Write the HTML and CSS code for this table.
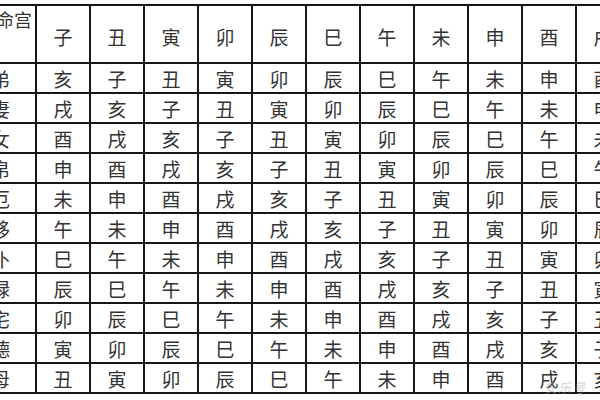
FILE: index.html
```html
<!DOCTYPE html>
<html lang="zh">
<head>
<meta charset="utf-8">
<link rel="stylesheet" href="styles.css">
</head>
<body>
<div class="page">
  <div class="grid">
    <div class="cell corner">命宫</div>
    <div class="cell head">子</div><div class="cell head">丑</div><div class="cell head">寅</div><div class="cell head">卯</div><div class="cell head">辰</div><div class="cell head">巳</div><div class="cell head">午</div><div class="cell head">未</div><div class="cell head">申</div><div class="cell head">酉</div><div class="cell head">戌</div><div class="cell head">亥</div>

    <div class="cell label">兄弟</div>
    <div class="cell">亥</div><div class="cell">子</div><div class="cell">丑</div><div class="cell">寅</div><div class="cell">卯</div><div class="cell">辰</div><div class="cell">巳</div><div class="cell">午</div><div class="cell">未</div><div class="cell">申</div><div class="cell">酉</div><div class="cell">戌</div>

    <div class="cell label">夫妻</div>
    <div class="cell">戌</div><div class="cell">亥</div><div class="cell">子</div><div class="cell">丑</div><div class="cell">寅</div><div class="cell">卯</div><div class="cell">辰</div><div class="cell">巳</div><div class="cell">午</div><div class="cell">未</div><div class="cell">申</div><div class="cell">酉</div>

    <div class="cell label">子女</div>
    <div class="cell">酉</div><div class="cell">戌</div><div class="cell">亥</div><div class="cell">子</div><div class="cell">丑</div><div class="cell">寅</div><div class="cell">卯</div><div class="cell">辰</div><div class="cell">巳</div><div class="cell">午</div><div class="cell">未</div><div class="cell">申</div>

    <div class="cell label">财帛</div>
    <div class="cell">申</div><div class="cell">酉</div><div class="cell">戌</div><div class="cell">亥</div><div class="cell">子</div><div class="cell">丑</div><div class="cell">寅</div><div class="cell">卯</div><div class="cell">辰</div><div class="cell">巳</div><div class="cell">午</div><div class="cell">未</div>

    <div class="cell label">疾厄</div>
    <div class="cell">未</div><div class="cell">申</div><div class="cell">酉</div><div class="cell">戌</div><div class="cell">亥</div><div class="cell">子</div><div class="cell">丑</div><div class="cell">寅</div><div class="cell">卯</div><div class="cell">辰</div><div class="cell">巳</div><div class="cell">午</div>

    <div class="cell label">迁移</div>
    <div class="cell">午</div><div class="cell">未</div><div class="cell">申</div><div class="cell">酉</div><div class="cell">戌</div><div class="cell">亥</div><div class="cell">子</div><div class="cell">丑</div><div class="cell">寅</div><div class="cell">卯</div><div class="cell">辰</div><div class="cell">巳</div>

    <div class="cell label">奴仆</div>
    <div class="cell">巳</div><div class="cell">午</div><div class="cell">未</div><div class="cell">申</div><div class="cell">酉</div><div class="cell">戌</div><div class="cell">亥</div><div class="cell">子</div><div class="cell">丑</div><div class="cell">寅</div><div class="cell">卯</div><div class="cell">辰</div>

    <div class="cell label">官禄</div>
    <div class="cell">辰</div><div class="cell">巳</div><div class="cell">午</div><div class="cell">未</div><div class="cell">申</div><div class="cell">酉</div><div class="cell">戌</div><div class="cell">亥</div><div class="cell">子</div><div class="cell">丑</div><div class="cell">寅</div><div class="cell">卯</div>

    <div class="cell label">田宅</div>
    <div class="cell">卯</div><div class="cell">辰</div><div class="cell">巳</div><div class="cell">午</div><div class="cell">未</div><div class="cell">申</div><div class="cell">酉</div><div class="cell">戌</div><div class="cell">亥</div><div class="cell">子</div><div class="cell">丑</div><div class="cell">寅</div>

    <div class="cell label">福德</div>
    <div class="cell">寅</div><div class="cell">卯</div><div class="cell">辰</div><div class="cell">巳</div><div class="cell">午</div><div class="cell">未</div><div class="cell">申</div><div class="cell">酉</div><div class="cell">戌</div><div class="cell">亥</div><div class="cell">子</div><div class="cell">丑</div>

    <div class="cell label">父母</div>
    <div class="cell">丑</div><div class="cell">寅</div><div class="cell">卯</div><div class="cell">辰</div><div class="cell">巳</div><div class="cell">午</div><div class="cell">未</div><div class="cell">申</div><div class="cell">酉</div><div class="cell">戌</div><div class="cell">亥</div><div class="cell">子</div>
  </div>
  <span class="watermark">安乐号</span>
</div>
</body>
</html>
```

FILE: styles.css
```css
html, body {
  margin: 0;
  padding: 0;
  background: #ffffff;
}

body {
  width: 600px;
  height: 400px;
  overflow: hidden;
  font-family: "Noto Sans CJK SC", "Noto Sans", sans-serif;
}

.page {
  position: relative;
  width: 600px;
  height: 400px;
  overflow: hidden;
}

.grid {
  display: grid;
  grid-template-columns: 80px repeat(12, 52px);
  grid-template-rows: 56px repeat(11, 28px);
  gap: 2px;
  padding: 2px;
  background: #161616;
  width: max-content;
  margin-top: 4px;
  margin-left: -47px;
}

.cell {
  background: #ffffff;
  display: flex;
  align-items: center;
  justify-content: center;
  font-size: 19px;
  line-height: 1;
  color: #333333;
  white-space: nowrap;
}

.head {
  padding-top: 4px;
}

.label {
  justify-content: flex-end;
  padding-right: 25px;
}

.corner {
  justify-content: flex-end;
  align-items: flex-start;
  padding-top: 4px;
  padding-right: 3px;
  font-size: 18px;
}

.watermark {
  position: absolute;
  left: 544px;
  top: 378px;
  font-size: 13px;
  font-style: italic;
  color: rgba(160, 160, 160, 0.55);
  letter-spacing: 1px;
}
```
